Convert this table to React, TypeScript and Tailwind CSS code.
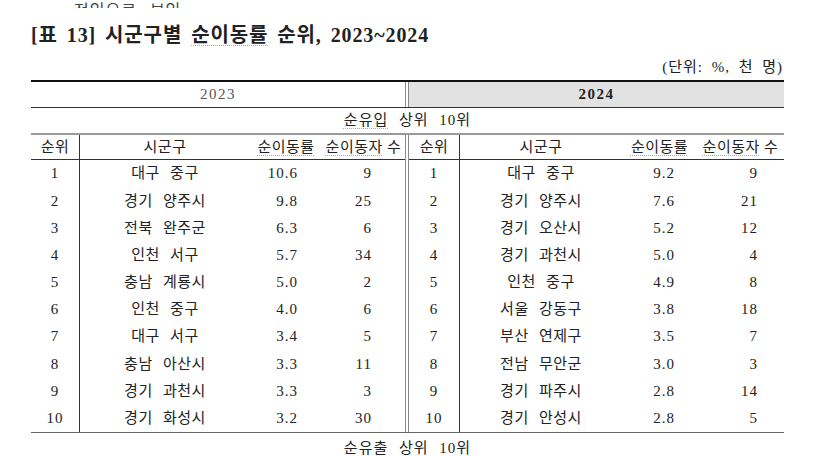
import React from 'react';

const FONT = "font-['Liberation_Serif','Noto_Sans_CJK_KR',serif]";

type Row = [number, string, string, string];

const rows2023: Row[] = [
  [1, '대구 중구', '10.6', '9'],
  [2, '경기 양주시', '9.8', '25'],
  [3, '전북 완주군', '6.3', '6'],
  [4, '인천 서구', '5.7', '34'],
  [5, '충남 계룡시', '5.0', '2'],
  [6, '인천 중구', '4.0', '6'],
  [7, '대구 서구', '3.4', '5'],
  [8, '충남 아산시', '3.3', '11'],
  [9, '경기 과천시', '3.3', '3'],
  [10, '경기 화성시', '3.2', '30'],
];

const rows2024: Row[] = [
  [1, '대구 중구', '9.2', '9'],
  [2, '경기 양주시', '7.6', '21'],
  [3, '경기 오산시', '5.2', '12'],
  [4, '경기 과천시', '5.0', '4'],
  [5, '인천 중구', '4.9', '8'],
  [6, '서울 강동구', '3.8', '18'],
  [7, '부산 연제구', '3.5', '7'],
  [8, '전남 무안군', '3.0', '3'],
  [9, '경기 파주시', '2.8', '14'],
  [10, '경기 안성시', '2.8', '5'],
];

// spell-check squiggle seen under some words
function Sq({ children }: { children: React.ReactNode }) {
  return (
    <span className="underline decoration-dotted decoration-[#e8955a] decoration-1 underline-offset-[3px]">
      {children}
    </span>
  );
}

function Half({ rows, left }: { rows: Row[]; left: boolean }) {
  const w = left
    ? { rank: 'w-[49px]', name: 'w-[170px]', rate: 'w-[72px]', cnt: 'w-[83px]', ratePad: 'pr-[24px]', cntPad: 'pr-[33px]' }
    : { rank: 'w-[51px]', name: 'w-[162px]', rate: 'w-[75px]', cnt: 'w-[87px]', ratePad: 'pr-[22px]', cntPad: 'pr-[26px]' };
  return (
    <div className="flex flex-col">
      <div className="flex h-[25px] items-center border-b border-[#333]">
        <div className={`${w.rank} h-full border-r border-[#333] flex items-center justify-center`}>순위</div>
        <div className={`${w.name} text-center`}>시군구</div>
        <div className={`${w.rate} text-center whitespace-nowrap`}>
          <Sq>순이동률</Sq>
        </div>
        <div className={`${w.cnt} text-center whitespace-nowrap`}>
          <Sq>순이동자</Sq> 수
        </div>
      </div>
      {rows.map((r) => (
        <div key={r[0]} className="flex h-[27.2px] items-center">
          <div className={`${w.rank} h-full border-r border-[#333] flex items-center justify-center tracking-[1px]`}>
            {r[0]}
          </div>
          <div className={`${w.name} text-center [word-spacing:6px]`}>{r[1]}</div>
          <div className={`${w.rate} ${w.ratePad} text-right tracking-[1px]`}>{r[2]}</div>
          <div className={`${w.cnt} ${w.cntPad} text-right tracking-[1px]`}>{r[3]}</div>
        </div>
      ))}
    </div>
  );
}

export default function App() {
  return (
    <div className={`w-[830px] h-[456px] overflow-hidden bg-white text-[#222] ${FONT}`}>
      <div className="h-[8px] overflow-hidden flex items-end pl-[74px]">
        <div className="text-[16px] leading-[16px] translate-y-[11px] tracking-[1px] text-[#444] [word-spacing:8px]">
          전입으로 보임.
        </div>
      </div>

      <div className="mt-[13px] pl-[31px] h-[28px] flex items-center text-[20px] font-bold tracking-[0.9px] text-[#222] [word-spacing:3px]">
        [표 13] 시군구별&nbsp;<Sq>순이동률</Sq>&nbsp;순위, 2023~2024
      </div>

      <div className="mt-[8px] h-[20px] flex items-center justify-end pr-[47px] text-[15px] tracking-[1px] [word-spacing:4px]">
        (단위: %, 천 명)
      </div>

      <div className="mt-[3px] ml-[31px] w-[753px] text-[15px] tracking-[0.5px] border-t-2 border-[#111]">
        <div className="flex h-[26px] border-b border-[#333]">
          <div className="w-[374px] flex items-center justify-center text-[#555] tracking-[1.5px]">2023</div>
          <div className="w-[4px] border-x border-[#8a8a8a]" />
          <div className="flex-1 bg-[#e2e2e2] flex items-center justify-center font-bold tracking-[1.5px]">2024</div>
        </div>

        <div className="h-[27px] flex items-center justify-center border-b-2 border-[#9a9a9a] tracking-[1px] [word-spacing:6px]">
          <Sq>순유입</Sq>&nbsp;상위 10위
        </div>

        <div className="flex border-b-[1.5px] border-[#666]">
          <div className="w-[374px]">
            <Half rows={rows2023} left />
          </div>
          <div className="w-[4px] border-x border-[#8a8a8a]" />
          <div className="w-[375px]">
            <Half rows={rows2024} left={false} />
          </div>
        </div>

        <div className="h-[24px] pt-[6px] flex items-center justify-center tracking-[1px] [word-spacing:6px]">
          <Sq>순유출</Sq>&nbsp;상위 10위
        </div>
      </div>
    </div>
  );
}
